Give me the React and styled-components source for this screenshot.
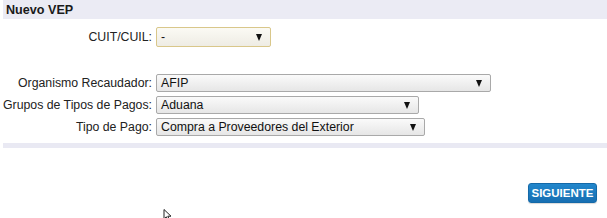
import React from "react";
import styled, { createGlobalStyle } from "styled-components";

const Global = createGlobalStyle`
  html, body { margin: 0; padding: 0; background: #fff; }
  body { font-family: "Liberation Sans", Arial, sans-serif; font-size: 12.3px; color: #111; }
`;

const Page = styled.div`
  position: relative;
  width: 607px;
  height: 218px;
  overflow: hidden;
  padding-left: 3px;
  box-sizing: border-box;
`;

const Header = styled.div`
  height: 19px;
  background: #ebebf4;
  display: flex;
  align-items: center;
  padding-left: 3px;
  font-weight: bold;
  font-size: 12.6px;
  color: #1a1a1a;
`;

const Form = styled.div`
  display: grid;
  grid-template-columns: 149px auto;
  column-gap: 4px;
  align-items: center;
  justify-items: start;
  margin-top: ${(p) => p.$top}px;
  row-gap: ${(p) => p.$gap}px;
`;

const Label = styled.label`
  justify-self: end;
  white-space: nowrap;
  color: #222;
  font-size: 12.3px;
`;

const Select = styled.div`
  box-sizing: border-box;
  width: ${(p) => p.$w}px;
  height: ${(p) => p.$h || 18}px;
  border: 1px solid ${(p) => (p.$focus ? "#d9c78a" : "#a9a9a9")};
  border-radius: 2px;
  background: ${(p) =>
    p.$focus
      ? "linear-gradient(#fbfaf4, #eeece4)"
      : "linear-gradient(#fafafa, #e6e6e6)"};
  display: flex;
  align-items: center;
  justify-content: space-between;
  padding: 0 8px 0 4px;
  color: #111;
  font-size: 12.3px;
`;

const Arrow = styled.span`
  width: 0;
  height: 0;
  border-left: 3.5px solid transparent;
  border-right: 3.5px solid transparent;
  border-top: 7px solid #111;
  margin-top: 1px;
`;

const Separator = styled.div`
  height: 5px;
  background: #e9e9f3;
  margin-top: 7px;
`;

const Footer = styled.div`
  display: flex;
  justify-content: flex-end;
  padding-right: 10px;
  margin-top: 35px;
`;

const Button = styled.button`
  width: 69px;
  height: 20px;
  border: 1px solid #1469a8;
  border-radius: 3px;
  background: linear-gradient(#2287cc, #176fb2);
  color: #fff;
  font-family: "Liberation Sans", Arial, sans-serif;
  font-weight: bold;
  font-size: 11.5px;
  padding: 0;
  box-shadow: 0 1px 1px rgba(0, 0, 0, 0.15);
`;

const Cursor = styled.svg`
  position: absolute;
  left: 163px;
  top: 209px;
`;

const Field = ({ label, w, h, focus, value }) => (
  <>
    <Label>{label}</Label>
    <Select $w={w} $h={h} $focus={focus}>
      <span>{value}</span>
      <Arrow />
    </Select>
  </>
);

export default function App() {
  return (
    <>
      <Global />
      <Page>
        <Header>Nuevo VEP</Header>
        <Form $top={8} $gap={0}>
          <Field label="CUIT/CUIL:" w={115} h={20} focus value="-" />
        </Form>
        <Form $top={27} $gap={4}>
          <Field label="Organismo Recaudador:" w={335} value="AFIP" />
          <Field label="Grupos de Tipos de Pagos:" w={263} value="Aduana" />
          <Field
            label="Tipo de Pago:"
            w={269}
            value="Compra a Proveedores del Exterior"
          />
        </Form>
        <Separator />
        <Footer>
          <Button>SIGUIENTE</Button>
        </Footer>
        <Cursor width="10" height="12" viewBox="0 0 10 12">
          <path d="M1 0.5 L1 10 L3.3 7.8 L5 11.5 L6.5 10.8 L4.8 7.2 L8 7.2 Z" fill="#fff" stroke="#222" strokeWidth="1" />
        </Cursor>
      </Page>
    </>
  );
}
